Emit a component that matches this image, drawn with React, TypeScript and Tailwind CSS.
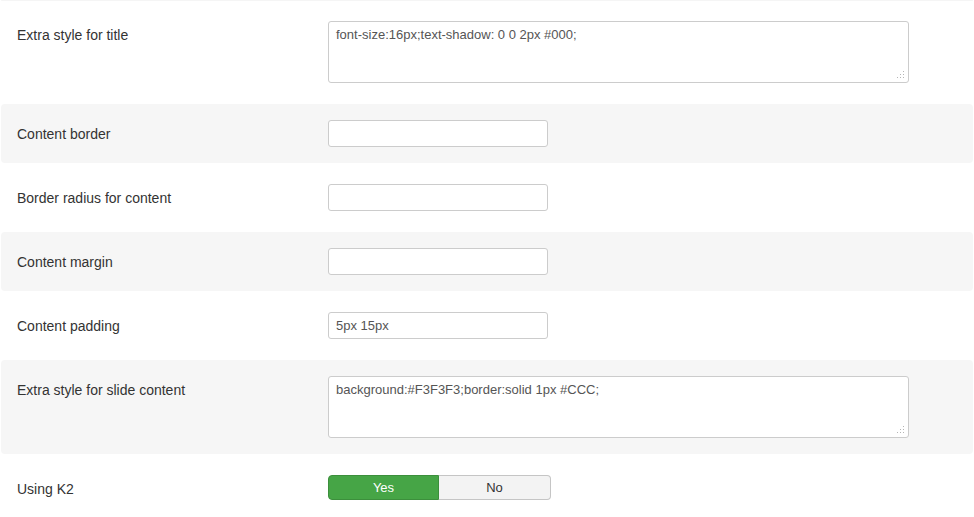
type Field = {
  label: string;
  kind: "text" | "textarea" | "toggle";
  value?: string;
};

const fields: Field[] = [
  { label: "Extra style for title", kind: "textarea", value: "font-size:16px;text-shadow: 0 0 2px #000;" },
  { label: "Content border", kind: "text" },
  { label: "Border radius for content", kind: "text" },
  { label: "Content margin", kind: "text" },
  { label: "Content padding", kind: "text", value: "5px 15px" },
  { label: "Extra style for slide content", kind: "textarea", value: "background:#F3F3F3;border:solid 1px #CCC;" },
  { label: "Using K2", kind: "toggle" },
];

function Grip() {
  return (
    <svg width="9" height="9" viewBox="0 0 9 9" className="absolute bottom-[2px] right-[2px]">
      <g fill="#b5b5b5">
        <rect x="6" y="0" width="1" height="1" />
        <rect x="3" y="3" width="1" height="1" />
        <rect x="6" y="3" width="1" height="1" />
        <rect x="0" y="6" width="1" height="1" />
        <rect x="3" y="6" width="1" height="1" />
        <rect x="6" y="6" width="1" height="1" />
      </g>
    </svg>
  );
}

function Control({ field }: { field: Field }) {
  if (field.kind === "textarea") {
    return (
      <div className="relative h-[62px] w-[581px] rounded-[3px] border border-[#cccccc] bg-white px-[7px] py-[4px] text-[13px] leading-[18px] text-[#555555]">
        {field.value}
        <Grip />
      </div>
    );
  }

  if (field.kind === "toggle") {
    return (
      <div className="flex h-[25px] w-[223px] text-[13px] leading-[23px]">
        <div className="flex w-[111px] items-center justify-center rounded-l-[4px] border border-[#3c8f3c] bg-[#46a546] text-white">
          Yes
        </div>
        <div className="flex flex-1 items-center justify-center rounded-r-[4px] border border-l-0 border-[#c5c5c5] bg-[#f3f3f3] text-[#333333]">
          No
        </div>
      </div>
    );
  }

  return (
    <div className="h-[27px] w-[220px] rounded-[3px] border border-[#cccccc] bg-white px-[7px] text-[13px] leading-[25px] text-[#555555]">
      {field.value}
    </div>
  );
}

export default function App() {
  return (
    <div
      className="h-[517px] w-[974px] overflow-hidden bg-white text-[14px] text-[#333333]"
      style={{ fontFamily: '"Liberation Sans", Arial, sans-serif' }}
    >
      <div className="mx-[1px] h-[1px] rounded-b-[4px] bg-[#f5f5f5]" />

      <div className="mt-[4px] flex flex-col gap-[5px]">
        {fields.map((field, i) => (
          <div
            key={field.label}
            className={
              i % 2 === 1
                ? "mx-[1px] flex rounded-[4px] bg-[#f6f6f6] py-[16px]"
                : "mx-[1px] flex rounded-[4px] bg-white py-[16px]"
            }
          >
            <div className="w-[327px] pl-[16px] pt-[4px] leading-[20px]">
              {field.label}
            </div>

            <Control field={field} />
          </div>
        ))}
      </div>
    </div>
  );
}
